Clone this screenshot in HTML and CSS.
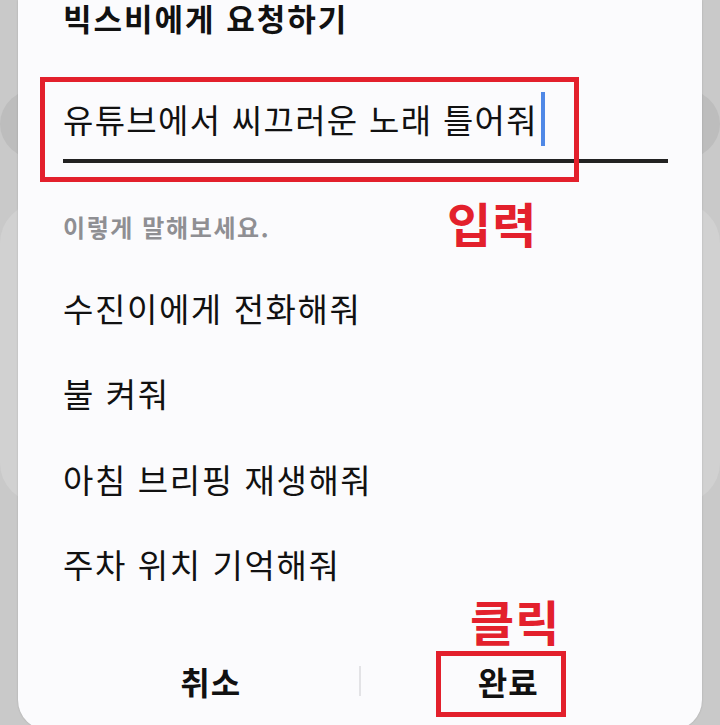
FILE: index.html
```html
<!DOCTYPE html>
<html lang="ko">
<head>
<meta charset="utf-8">
<link rel="stylesheet" href="styles.css">
</head>
<body>
<div class="screen">
  <div class="bg-blob bg-dark bg-left"></div>
  <div class="bg-blob bg-dark bg-right"></div>
  <div class="bg-blob bg-light bg-left2"></div>
  <div class="bg-blob bg-light bg-right2"></div>

  <div class="dialog">
    <h1 class="title">빅스비에게 요청하기</h1>
    <div class="input-row">
      <span class="input-text">유튜브에서 씨끄러운 노래 틀어줘</span><span class="cursor"></span>
    </div>
    <p class="hint">이렇게 말해보세요.</p>
    <ul class="suggestions">
      <li>수진이에게 전화해줘</li>
      <li>불 켜줘</li>
      <li>아침 브리핑 재생해줘</li>
      <li>주차 위치 기억해줘</li>
    </ul>
    <div class="buttons">
      <button class="btn">취소</button>
      <span class="divider"></span>
      <button class="btn">완료</button>
    </div>

    <div class="mark mark-input"></div>
    <div class="label label-input">입력</div>
    <div class="label label-click">클릭</div>
    <div class="mark mark-done"></div>
  </div>
</div>
</body>
</html>
```

FILE: styles.css
```css
* { box-sizing: border-box; }

html, body {
  margin: 0;
  padding: 0;
}

body {
  width: 720px;
  height: 725px;
  overflow: hidden;
  background: #c9c9c9;
  font-family: "Noto Sans CJK KR", "Noto Sans", sans-serif;
  color: #111;
}

.screen {
  position: relative;
  width: 720px;
  height: 725px;
  overflow: hidden;
  padding-left: 18px;
}

.bg-blob {
  position: absolute;
  z-index: 0;
}

.bg-dark {
  background: #bdbdbd;
  border-radius: 50%;
  width: 80px;
  height: 72px;
  top: 88px;
}

.bg-left { left: 0; }
.bg-right { right: 0; }

.bg-light {
  background: #d1d1d1;
  border-radius: 40px;
  width: 80px;
  top: 203px;
  height: 300px;
}

.bg-left2 { left: 0; }
.bg-right2 { right: 0; }

.dialog {
  position: relative;
  z-index: 1;
  width: 684px;
  height: 730px;
  background: #fbfbfd;
  border-radius: 0 0 30px 30px;
  box-shadow: 0 0 2px rgba(0,0,0,0.18);
  padding: 0 34px 0 45px;
  display: flex;
  flex-direction: column;
}

.title {
  margin: 0;
  font-size: 31px;
  line-height: 36px;
  letter-spacing: 2px;
  font-weight: 700;
  color: #111;
}

.input-row {
  margin-top: 59px;
  height: 68px;
  padding-bottom: 16px;
  border-bottom: 4px solid #222;
  display: flex;
  align-items: center;
}

.input-text {
  font-size: 33px;
  line-height: 48px;
  letter-spacing: 1.3px;
  color: #111;
}

.cursor {
  display: inline-block;
  width: 4px;
  height: 54px;
  margin-left: 3px;
  background: #4f88e6;
}

.hint {
  margin: 49px 0 0 0;
  font-size: 24px;
  line-height: 30px;
  letter-spacing: 1.6px;
  font-weight: 700;
  color: #8f8f93;
}

.suggestions {
  list-style: none;
  margin: 23px 0 0 0;
  padding: 0;
}

.suggestions li {
  height: 85.5px;
  display: flex;
  align-items: center;
  font-size: 33px;
  line-height: 48px;
  letter-spacing: 1.6px;
  color: #111;
}

.buttons {
  margin-top: 52px;
  width: 593px;
  display: flex;
  align-items: center;
}

.btn {
  flex: 1;
  border: 0;
  background: transparent;
  padding: 0;
  font-family: inherit;
  font-size: 32px;
  line-height: 44px;
  letter-spacing: 1px;
  font-weight: 700;
  color: #111;
}

.divider {
  width: 2px;
  height: 30px;
  background: #e3e3e6;
}

.mark {
  position: absolute;
  border: 5px solid #e3202c;
}

.mark-input {
  left: 22px;
  top: 77px;
  width: 539px;
  height: 105px;
}

.mark-done {
  left: 418px;
  top: 651px;
  width: 130px;
  height: 66px;
}

.label {
  position: absolute;
  color: #e3202c;
  font-weight: 700;
  font-size: 48px;
  line-height: 56px;
  letter-spacing: 1px;
}

.label-input {
  left: 429px;
  top: 194px;
}

.label-click {
  left: 452px;
  top: 592px;
}
```
